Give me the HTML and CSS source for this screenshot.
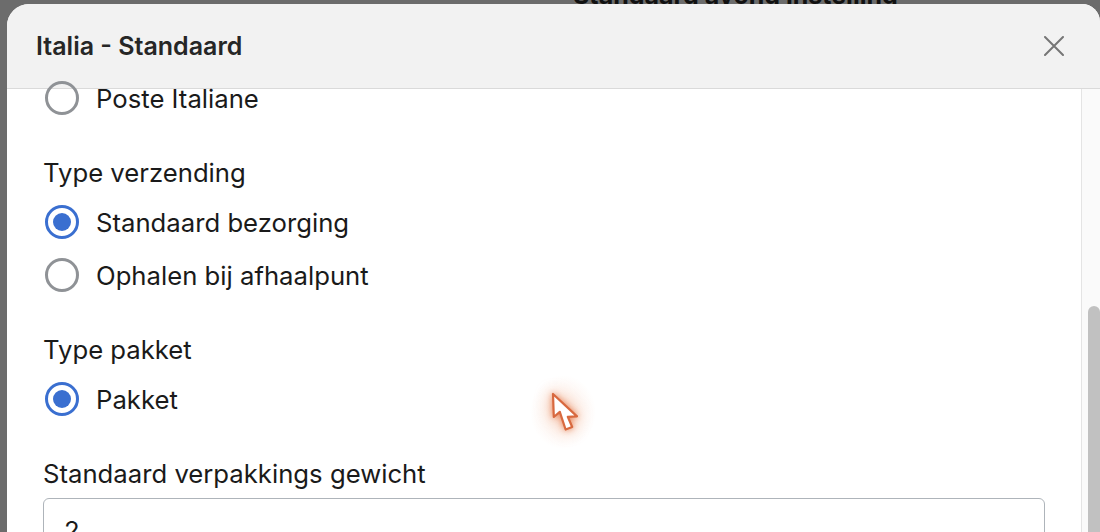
FILE: index.html
```html
<!DOCTYPE html>
<html lang="nl">
<head>
<meta charset="utf-8">
<title>Italia - Standaard</title>
<link rel="stylesheet" href="styles.css">
</head>
<body>
<div class="backdrop-title">Standaard avond instelling</div>
<div class="modal">
  <header class="modal-header">
    <h1 class="modal-title">Italia - Standaard</h1>
    <button class="close" aria-label="Sluiten">
      <svg width="20" height="20" viewBox="0 0 20 20"><path d="M1 1 L19 19 M19 1 L1 19" stroke="#767676" stroke-width="2" stroke-linecap="round" fill="none"/></svg>
    </button>
  </header>
  <div class="modal-body">
    <div class="content">
      <div class="radios">
        <label class="radio"><span class="circle"></span><span>Poste Italiane</span></label>
      </div>
      <div class="group">
        <div class="group-label">Type verzending</div>
        <div class="radios">
          <label class="radio"><span class="circle on"></span><span>Standaard bezorging</span></label>
          <label class="radio"><span class="circle"></span><span>Ophalen bij afhaalpunt</span></label>
        </div>
      </div>
      <div class="group">
        <div class="group-label">Type pakket</div>
        <div class="radios">
          <label class="radio"><span class="circle on"></span><span>Pakket</span></label>
        </div>
      </div>
      <div class="group">
        <div class="group-label field-label">Standaard verpakkings gewicht</div>
        <div class="input">2</div>
      </div>
    </div>
    <div class="scrollbar"><div class="thumb"></div></div>
  </div>
</div>
<div class="cursor-glow"></div>
<svg class="cursor" width="40" height="52" viewBox="-6 -6 40 52">
  <path d="M0 0 L0.8 23 L6.8 17.8 L12.6 35.5 L19.2 33 L14.8 22.8 L24 22.4 Z" fill="#ffffff" stroke="#d8693f" stroke-width="2.2" stroke-linejoin="round"/>
</svg>
</body>
</html>
```

FILE: styles.css
```css
html, body {
  margin: 0;
  padding: 0;
  height: 100%;
  overflow: hidden;
}
body {
  background: #6c6c6c;
  font-family: Inter, "Noto Sans", "Liberation Sans", sans-serif;
  color: #1a1a1a;
  position: relative;
}
.backdrop-title {
  position: absolute;
  left: 573px;
  top: -20px;
  font-size: 25px;
  font-weight: 700;
  color: #111;
  white-space: nowrap;
}
.modal {
  position: relative;
  margin: 4px 0 0 7px;
  width: 1093px;
  height: 528px;
  background: #fff;
  border-radius: 22px 18px 0 0;
  overflow: hidden;
  display: flex;
  flex-direction: column;
}
.modal-header {
  flex: 0 0 auto;
  height: 85px;
  box-sizing: border-box;
  background: #f2f2f2;
  border-bottom: 1px solid #dadada;
  display: flex;
  align-items: center;
  justify-content: space-between;
  padding: 0 36px 0 29px;
}
.modal-title {
  margin: 0;
  font-size: 25px;
  font-weight: 600;
  color: #262626;
}
.close {
  border: 0;
  background: none;
  padding: 0;
  width: 20px;
  height: 20px;
  display: flex;
}
.modal-body {
  flex: 1;
  display: flex;
  min-height: 0;
}
.content {
  flex: 1;
  padding: 0 36px;
  margin-top: -8px;
  display: flex;
  flex-direction: column;
  gap: 40px;
  overflow: hidden;
}
.radios {
  display: flex;
  flex-direction: column;
  gap: 19px;
}
.radio {
  display: flex;
  align-items: center;
  gap: 17px;
  height: 34px;
  font-size: 25.7px;
  padding-left: 2px;
}
.circle {
  width: 34px;
  height: 34px;
  box-sizing: border-box;
  border-radius: 50%;
  border: 3px solid #8f9296;
  flex: 0 0 auto;
  display: flex;
  align-items: center;
  justify-content: center;
}
.circle.on {
  border: 3.5px solid #3a6fd0;
}
.circle.on::after {
  content: "";
  width: 18px;
  height: 18px;
  border-radius: 50%;
  background: #3a6fd0;
}
.group-label {
  font-size: 25.7px;
  line-height: 34px;
  padding-top: 1px;
  margin-bottom: 15px;
}
.group-label.field-label {
  margin-bottom: 7px;
}
.input {
  height: 50px;
  border: 1.5px solid #aeb4ba;
  border-radius: 6px;
  font-size: 25.7px;
  padding: 17px 20px 0;
  box-sizing: border-box;
  line-height: 30px;
}
.scrollbar {
  flex: 0 0 18px;
  background: #fafafa;
  border-left: 1px solid #e4e4e4;
  display: flex;
  justify-content: flex-end;
}
.thumb {
  width: 12px;
  margin-top: 217px;
  background: #c1c1c1;
  border-radius: 6px 6px 0 0;
}
.cursor-glow {
  position: absolute;
  left: 530px;
  top: 375px;
  width: 66px;
  height: 74px;
  border-radius: 50%;
  background: radial-gradient(closest-side, rgba(240, 170, 130, 0.28), rgba(245, 190, 160, 0.12) 60%, rgba(255, 255, 255, 0));
}
.cursor {
  position: absolute;
  left: 547px;
  top: 388px;
  filter: drop-shadow(0 0 3px rgba(225, 110, 60, 0.75)) drop-shadow(0 0 8px rgba(235, 140, 95, 0.45));
}
```
